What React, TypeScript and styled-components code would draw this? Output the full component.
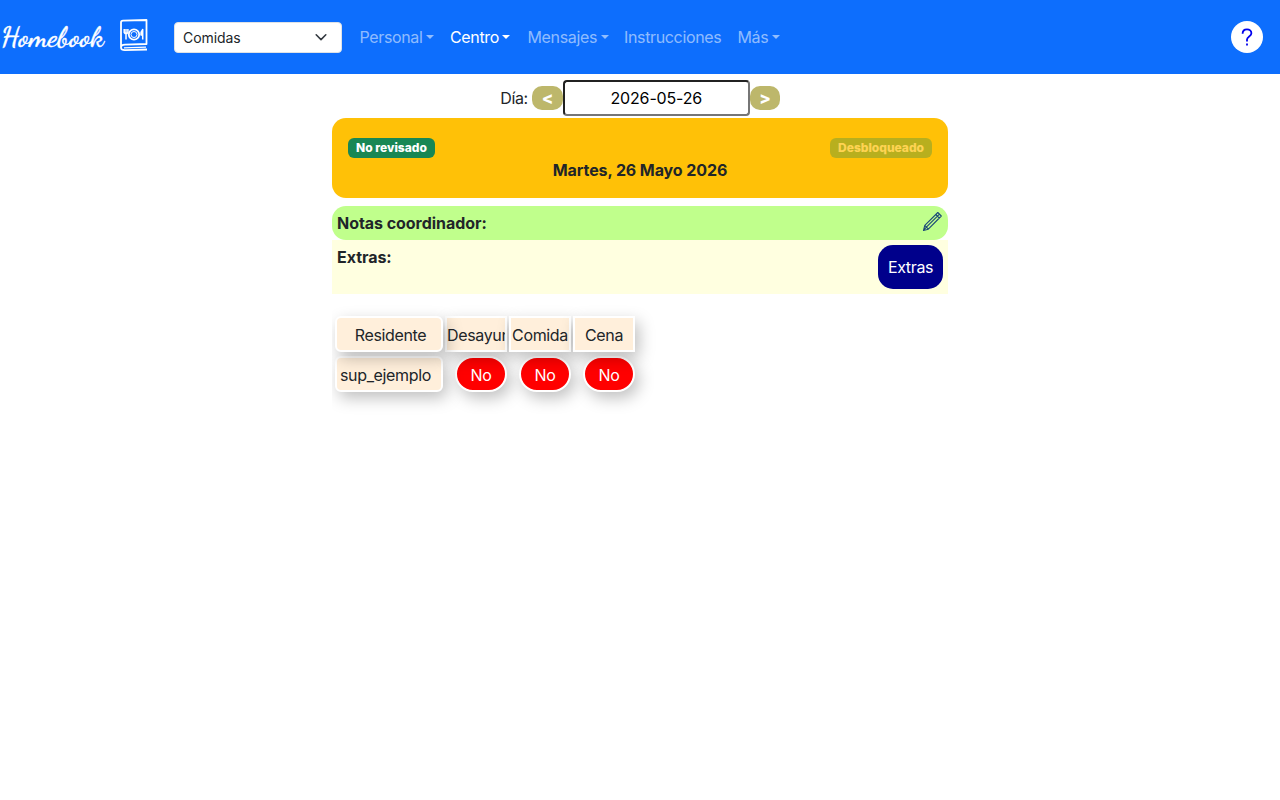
import React from "react";
import styled, { createGlobalStyle } from "styled-components";

const Global = createGlobalStyle`
  *, *::before, *::after { box-sizing: border-box; }
  body { margin: 0; background: #fff; color: #212529; font: 400 16px/24px Inter, "Liberation Sans", sans-serif; letter-spacing: -0.022em; }
  button, input, select { font: inherit; letter-spacing: inherit; }
`;

const Navbar = styled.nav`
  height: 74px; display: flex; align-items: center; background: #0d6efd; padding-right: 17px;
`;
const Brand = styled.span`
  width: 120px; height: 40px; flex: none; padding: 3px 0 0 1px; color: #fff; white-space: nowrap;
  font: normal 500 29px/34px "Dancing Script", cursive; letter-spacing: 0; -webkit-text-stroke: 0.4px #fff;
`;
const BookIcon = styled.svg`
  width: 28px; height: 33px; flex: none; margin-top: -4px;
`;
const Picker = styled.button`
  width: 168px; height: 31px; margin: 1px 10px 0 26px; padding: 0 13px 0 8px; flex: none;
  display: flex; align-items: center; justify-content: space-between;
  border: 1px solid #dee2e6; border-radius: 4px; background: #fff; color: #212529; font-size: 14px; letter-spacing: -0.005em;
`;
const PickerArrow = styled.svg`
  width: 14px; height: 14px; margin-top: -2px;
`;
const Links = styled.div`
  display: flex; flex: 1;
`;
const NavLink = styled.a<{ $active?: boolean; $width: number }>`
  width: ${p => p.$width}px; padding: 8px 0 8px 7.5px; display: flex; align-items: center; white-space: nowrap;
  color: ${p => (p.$active ? "#fff" : "rgba(255,255,255,.55)")};
`;
const Caret = styled.i`
  margin-left: 3.5px; border-top: 4.5px solid; border-left: 4.5px solid transparent; border-right: 4.5px solid transparent;
`;
const Help = styled.button`
  width: 32px; height: 32px; padding: 0; display: grid; place-items: center; border: 0; border-radius: 50%; background: #fff; color: #0000ee;
`;
const Page = styled.main`
  width: 616px; min-height: calc(100vh - 74px); margin: 0 auto; padding-top: 6px;
`;
const DayBar = styled.div`
  height: 36px; display: flex; align-items: center; justify-content: center;
`;
const DayLabel = styled.span`
  margin-right: 4px;
`;
const Step = styled.button<{ $width: number }>`
  width: ${p => p.$width}px; height: 24px; padding: 0; border: 0; border-radius: 10px; background: #bdb76b; color: #fff; font-weight: 800; font-size: 17px; line-height: 24px;
`;
const DateInput = styled.input`
  width: 187px; height: 36px; padding: 1px 2px; border: 2px solid; border-radius: 4px;
  border-color: #212121 #767676 #767676 #212121; text-align: center; color: #000; background: #fff; outline: 0; letter-spacing: -0.01em;
`;
const DayCard = styled.section`
  height: 80px; margin-top: 2px; padding: 16px; border-radius: 14px; background: #ffc107;
`;
const Badges = styled.div`
  height: 24px; display: flex; align-items: center; justify-content: space-between; padding-top: 4px;
`;
const Badge = styled.span<{ $faded?: boolean; $width: number }>`
  width: ${p => p.$width}px; height: 20px; border-radius: 6px; background: #198754; color: #fff; text-align: center;
  font-size: 12px; line-height: 20px; font-weight: 800; letter-spacing: 0; opacity: ${p => (p.$faded ? 0.3 : 1)};
`;
const DayTitle = styled.div`
  text-align: center; font-weight: 700; letter-spacing: -0.006em;
`;
const Notes = styled.section`
  height: 34px; margin-top: 8px; padding: 5px; display: flex; justify-content: space-between; border-radius: 14px; background: #c0ff8c; font-weight: 700; letter-spacing: -0.003em;
`;
const Pencil = styled.svg`
  width: 21px; height: 21px;
`;
const Extras = styled.section`
  height: 54px; padding: 5px; display: flex; justify-content: space-between; align-items: flex-start; background: #ffffe0; font-weight: 700; letter-spacing: -0.003em;
`;
const ExtrasButton = styled.button`
  width: 65px; height: 44px; padding: 0; border: 0; border-radius: 15px; background: #00008b; color: #fff; font-weight: 400; letter-spacing: -0.022em;
`;
const Table = styled.div`
  margin-top: 8px; padding: 14px 3px 40px; display: grid; row-gap: 4px; overflow: hidden;
`;
const Row = styled.div<{ $top?: boolean }>`
  display: flex; gap: 2px; position: relative; z-index: ${p => (p.$top ? 1 : 0)};
`;
const Cell = styled.div<{ $name?: boolean; $align?: string }>`
  width: ${p => (p.$name ? 108 : 62)}px; height: 36px; overflow: hidden; white-space: nowrap; flex: none;
  position: relative; z-index: ${p => (p.$name ? 1 : 0)};
  padding: ${p => (p.$name && !p.$align ? "5px 0 5px 3px" : p.$name ? "5px 3px" : "5px 0")};
  border: 2px solid #fff; border-radius: ${p => (p.$name ? 6 : 0)}px;
  background: #ffefdb; text-align: ${p => p.$align || "center"}; box-shadow: 4px 6px 16px rgba(0,0,0,.25);
`;
const Choice = styled.button`
  width: 52px; height: 36px; margin-left: 10px; padding: 1px 0 0; flex: none; border: 2px solid #fff; border-radius: 18px;
  background: #f00; color: #fff; box-shadow: 4px 6px 16px rgba(0,0,0,.25);
`;

const links = [
  { text: "Personal", width: 90.5, menu: true },
  { text: "Centro", width: 77.5, menu: true, active: true },
  { text: "Mensajes", width: 96.5, menu: true },
  { text: "Instrucciones", width: 113.5 },
  { text: "Más", width: 58, menu: true },
];

export default function App() {
  return (
    <>
      <Global />
      <Navbar>
        <Brand>Homebook</Brand>
        <BookIcon viewBox="0 0 28 33" fill="none" stroke="#fff" strokeWidth="1.8" strokeLinejoin="round">
          <path d="M1 28V3.5Q1 1.8 3 1.7L26.5 1V25L5 25.7Q1 26 1 28.5Q1 31.3 5 31.2L27 30.5" />
          <path d="M4 28.8L26 28.2" strokeWidth="1.3" />
          <circle cx="14" cy="15.5" r="5.2" /><circle cx="14" cy="15.5" r="3" strokeWidth="1" />
          <path d="M4.2 10V13.5Q6 16 7.9 13.5V10M6 10V20.5M22.7 20.5V10.5Q20.5 13 21 16H22.7" strokeWidth="1.5" />
        </BookIcon>
        <Picker>
          Comidas
          <PickerArrow viewBox="0 0 16 16" fill="none" stroke="#343a40" strokeWidth="1.8" strokeLinecap="round" strokeLinejoin="round"><path d="m2.5 5.5 5.5 5.5 5.5-5.5" /></PickerArrow>
        </Picker>
        <Links>
          {links.map(l => <NavLink key={l.text} $width={l.width} $active={l.active}>{l.text}{l.menu && <Caret />}</NavLink>)}
        </Links>
        <Help aria-label="Ayuda">
          <svg width="14" height="18" viewBox="0 0 14 18" fill="none" stroke="currentColor" strokeWidth="1.8"><path d="M2.6 5.7C2.6 2.8 4.4 1.3 7 1.3S11.4 3 11.4 5.2C11.4 8.3 7 8.5 7 11.5V13.4M7 15.6V17.6" /></svg>
        </Help>
      </Navbar>
      <Page>
        <DayBar>
          <DayLabel>Día:</DayLabel>
          <Step $width={31}>&lt;</Step>
          <DateInput defaultValue="2026-05-26" />
          <Step $width={30}>&gt;</Step>
        </DayBar>
        <DayCard>
          <Badges><Badge $width={87}>No revisado</Badge><Badge $width={102} $faded>Desbloqueado</Badge></Badges>
          <DayTitle>Martes, 26 Mayo 2026</DayTitle>
        </DayCard>
        <Notes>
          Notas coordinador:
          <Pencil viewBox="0 0 21 21" fill="none" stroke="#1c4a78" strokeWidth="1.1" strokeLinejoin="round">
            <path d="M1.5 19.5L2.8 14.3L15.8 1.5L19.3 5L6.3 18.2ZM2.8 14.3L6.3 18.2M4.6 15.9L17 3.6M13.8 3.5L17.3 7M1.5 19.5L4.6 15.9" />
          </Pencil>
        </Notes>
        <Extras>Extras:<ExtrasButton>Extras</ExtrasButton></Extras>
        <Table>
          <Row $top>
            <Cell $name>Residente</Cell><Cell $align="left">Desayuno</Cell><Cell>Comida</Cell><Cell>Cena</Cell>
          </Row>
          <Row>
            <Cell $name $align="left">sup_ejemplo</Cell><Choice>No</Choice><Choice>No</Choice><Choice>No</Choice>
          </Row>
        </Table>
      </Page>
    </>
  );
}
